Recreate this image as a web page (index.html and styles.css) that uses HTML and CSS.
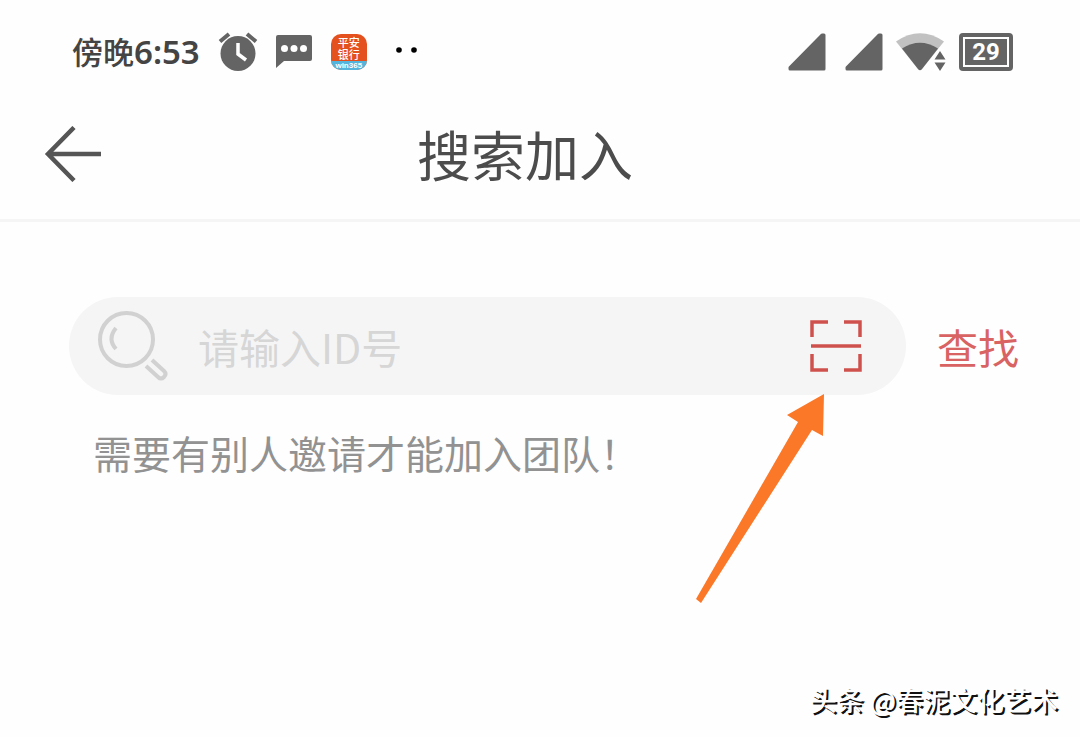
FILE: index.html
```html
<!DOCTYPE html>
<html lang="zh-CN">
<head>
<meta charset="utf-8">
<meta name="viewport" content="width=device-width, initial-scale=1">
<title>搜索加入</title>
<link rel="stylesheet" href="styles.css">
</head>
<body>
<div class="status">
  <time class="status-time">傍晚<span class="status-digits">6:53</span></time>
  <svg class="icon-alarm" width="40" height="40" viewBox="0 0 40 40" aria-hidden="true">
    <circle cx="20" cy="21.500" r="17.500" fill="#646464"/>
    <path d="M2 9.500L11 2M29 2L38 9.500" stroke="#646464" stroke-width="4" fill="none"/>
    <path d="M20 11V22L28 28" stroke="#fff" stroke-width="3.500" fill="none"/>
  </svg>
  <svg class="icon-chat" width="36" height="34" viewBox="0 0 36 34" aria-hidden="true">
    <path d="M2 0H34Q36 0 36 2V24Q36 26 34 26H8L0 33V2Q0 0 2 0Z" fill="#646464"/>
    <g fill="#fff"><circle cx="8.500" cy="13.500" r="3.500"/><circle cx="18" cy="13.500" r="3.500"/><circle cx="27.500" cy="13.500" r="3.500"/></g>
  </svg>
  <div class="bank">
    <span class="bank-name">平安</span>
    <span class="bank-name">银行</span>
    <span class="bank-tag">win365</span>
  </div>
  <svg class="icon-dots" width="22" height="12" viewBox="0 0 22 12" aria-hidden="true">
    <circle cx="3" cy="4" r="2.800"/><circle cx="18" cy="4" r="2.800"/>
  </svg>
  <div class="status-right">
    <svg width="38" height="38" viewBox="0 0 38 38" aria-hidden="true"><path d="M34 2L2 34.500V36H36V2Z" fill="#646464" stroke="#646464" stroke-width="3" stroke-linejoin="round"/></svg>
    <svg width="38" height="38" viewBox="0 0 38 38" aria-hidden="true"><path d="M34 2L2 34.500V36H36V2Z" fill="#646464" stroke="#646464" stroke-width="3" stroke-linejoin="round"/></svg>
    <svg class="icon-wifi" width="50" height="38" viewBox="0 0 50 38" aria-hidden="true">
      <path d="M0 8.500Q24 -8 48 8.500L26 36Q24 38 22 36Z" fill="#c1c1c1"/>
      <path d="M6 15.500Q24 4 42 15.500L26 36Q24 38.500 22 36Z" fill="#646464"/>
      <path d="M38 38V22L44 14L50 18V38Z" fill="#fff"/>
      <path d="M44 18L49.500 26.500H38.500ZM44 38L49.500 29.500H38.500Z" fill="#646464"/>
    </svg>
    <div class="battery"><span class="battery-level">29</span></div>
  </div>
</div>
<header class="header">
  <button class="back" type="button" aria-label="返回">
    <svg width="58" height="56" viewBox="0 0 58 56" aria-hidden="true"><path d="M30 1.500L4 28L30 54.500M4 28H57" stroke="#555" stroke-width="4.500" fill="none"/></svg>
  </button>
  <h1 class="title">搜索加入</h1>
</header>
<main class="content">
  <form class="search">
    <div class="field">
      <svg class="icon-search" width="70" height="70" viewBox="0 0 70 70" aria-hidden="true">
        <g fill="none" stroke="#d1d1d1" stroke-width="4">
          <circle cx="28.500" cy="28.500" r="26.500"/>
          <path d="M18 17Q9 28 18 38"/>
          <path d="M48 55L60 66Q63 69 66 66Q69 63 66 60L54 49"/>
        </g>
      </svg>
      <input class="input" type="text" placeholder="请输入ID号" aria-label="请输入ID号">
      <button class="scan" type="button" aria-label="扫描">
        <svg width="52" height="52" viewBox="0 0 52 52" aria-hidden="true">
          <path d="M2 17V2H18M34 2H50V17M50 34V50H34M18 50H2V34M1 26H51" fill="none" stroke="#cf514d" stroke-width="3.500"/>
        </svg>
      </button>
      <svg class="pointer" width="128" height="210" viewBox="0 0 128 210" aria-hidden="true">
        <path d="M128 0L91 21L102 28L0 205L5 209L116 36L127 42Z" fill="#fb7829"/>
      </svg>
    </div>
    <button class="find" type="submit">查找</button>
  </form>
  <p class="hint">需要有别人邀请才能加入团队！</p>
</main>
<footer class="credit">头条 @春泥文化艺术</footer>
</body>
</html>
```
FILE: styles.css
```css
* {
  box-sizing: border-box;
}

body {
  margin: 0;
  min-height: 100vh;
  display: flex;
  flex-direction: column;
  background: #fefefe;
  color: #4c4c4c;
  font-family: "Noto Sans CJK SC", sans-serif;
}

button,
input {
  margin: 0;
  padding: 0;
  border: 0;
  background: none;
  font: inherit;
}

svg {
  display: block;
  flex: none;
}

.status {
  display: flex;
  align-items: center;
  height: 88px;
  padding: 16px 67px 0 72px;
}

.status-time {
  font-size: 31px;
  font-weight: 500;
  line-height: 40px;
  padding-bottom: 2px;
  color: #444;
}

.status-digits {
  font-family: "Noto Sans", sans-serif;
  font-size: 33px;
  font-weight: 600;
}

.icon-alarm {
  margin-left: 18px;
}

.icon-chat {
  margin-left: 18px;
}

.bank {
  display: flex;
  flex-direction: column;
  justify-content: flex-end;
  width: 36px;
  height: 36px;
  margin-left: 19px;
  border-radius: 10px;
  overflow: hidden;
  background: #e4501e;
  color: #fff;
  text-align: center;
}

.bank-name {
  font-size: 11px;
  font-weight: 500;
  line-height: 12px;
}

.bank-tag {
  margin-top: 1px;
  background: #55b4dc;
  font-family: "Liberation Sans", sans-serif;
  font-size: 8px;
  font-weight: 700;
  line-height: 9px;
}

.icon-dots {
  margin-left: 29px;
}

.status-right {
  display: flex;
  align-items: center;
  gap: 19px;
  margin-left: auto;
}

.icon-wifi {
  margin-left: -6px;
}

.battery {
  width: 54px;
  height: 38px;
  margin-left: -6px;
  padding: 4px;
  border-radius: 4px;
  background: #646464;
}

.battery-level {
  display: block;
  border: 2px solid #fff;
  color: #fff;
  font-family: Roboto, sans-serif;
  font-size: 24px;
  font-weight: 700;
  line-height: 26px;
  text-align: center;
}

.header {
  display: grid;
  grid-template-columns: 74px 1fr 118px;
  align-items: center;
  height: 134px;
  padding: 0 30px 0 44px;
  border-bottom: 3px solid #f5f5f5;
}

.title {
  margin: 0;
  font-size: 54px;
  font-weight: 400;
  line-height: 72px;
  text-align: center;
}

.content {
  padding: 75px 61px 0 69px;
}

.search {
  display: flex;
  align-items: center;
  gap: 31px;
}

.field {
  position: relative;
  display: flex;
  flex: 1;
  align-items: center;
  height: 98px;
  padding: 0 44px 0 29px;
  border-radius: 49px;
  background: #f5f5f5;
}

.input {
  flex: 1;
  min-width: 0;
  height: 60px;
  margin-left: 30px;
  font-size: 41px;
  color: #4c4c4c;
}

.input::placeholder {
  color: #d6d6d6;
  opacity: 1;
}

.pointer {
  position: absolute;
  top: 97px;
  right: 82px;
}

.find {
  font-size: 41px;
  line-height: 60px;
  color: #d96362;
}

.hint {
  margin: 29px 0 0 24px;
  font-size: 39px;
  line-height: 56px;
  color: #929292;
}

.credit {
  margin-top: auto;
  padding: 0 22px 17px 0;
  font-size: 27px;
  font-weight: 500;
  line-height: 40px;
  text-align: right;
  color: #fff;
  text-shadow: 2px 2px 0 #111;
}
```
